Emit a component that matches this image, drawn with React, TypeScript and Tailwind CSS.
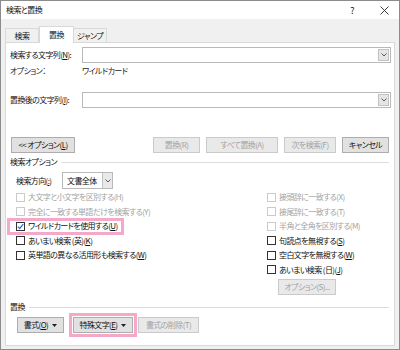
import type { ReactNode } from "react";

function U({ children }: { children: ReactNode }) {
  return <span className="underline underline-offset-[1px]">{children}</span>;
}

function Chevron() {
  return (
    <svg width="6" height="4" viewBox="0 0 6 4" aria-hidden>
      <path d="M0.5 0.5 3 3 5.5 0.5" fill="none" stroke="#5a5a5a" strokeWidth="1" />
    </svg>
  );
}

function Caret() {
  return (
    <svg width="5" height="3" viewBox="0 0 5 3" aria-hidden>
      <path d="M0 0h5L2.5 3z" fill="#222" />
    </svg>
  );
}

function Combo() {
  return (
    <div className="flex h-[16px] flex-1 border border-[#b9b9b9] bg-white p-px">
      <div className="ml-auto flex w-[11px] items-center justify-center border border-[#c2c2c2] bg-[#e5e5e5]">
        <Chevron />
      </div>
    </div>
  );
}

function Btn({
  children,
  className,
  disabled = false,
  caret = false,
}: {
  children: ReactNode;
  className: string;
  disabled?: boolean;
  caret?: boolean;
}) {
  return (
    <div
      className={[
        "flex h-[16px] items-center justify-center gap-[4px] border",
        disabled
          ? "border-[#cacaca] bg-[#e9e9e9] text-[#a3a3a3]"
          : "border-[#adadad] bg-[#e1e1e1] text-[#111]",
        className,
      ].join(" ")}
    >
      <span>{children}</span>
      {caret ? <Caret /> : null}
    </div>
  );
}

function Check({
  children,
  disabled = false,
  checked = false,
}: {
  children: ReactNode;
  disabled?: boolean;
  checked?: boolean;
}) {
  return (
    <div className="flex h-[14.5px] items-center gap-[3px]">
      <span
        className={[
          "flex size-[9px] shrink-0 items-center justify-center border bg-white",
          disabled ? "border-[#cbcbcb]" : "border-[#333]",
        ].join(" ")}
      >
        {checked ? (
          <svg width="7" height="7" viewBox="0 0 7 7" aria-hidden>
            <path d="M0.8 3.6 2.7 5.5 6.3 1.2" fill="none" stroke="#2b6fd1" strokeWidth="1.2" />
          </svg>
        ) : null}
      </span>
      <span className={disabled ? "text-[#a3a3a3]" : "text-[#111]"}>{children}</span>
    </div>
  );
}

function GroupLabel({ children }: { children: ReactNode }) {
  return (
    <div className="mr-[2px] flex h-[12px] items-center gap-[4px]">
      <span>{children}</span>
      <div className="h-px flex-1 bg-[#dcdcdc]" />
    </div>
  );
}

export default function App() {
  return (
    <div className="flex h-[350px] w-[400px] flex-col border border-[#8c8c8c] bg-[#f0f0f0] font-['Noto_Sans_CJK_JP','Noto_Sans',sans-serif] text-[8px] leading-none tracking-[-0.6px] text-[#111] [font-feature-settings:'palt']">
      {/* title bar */}
      <div className="flex h-[18px] shrink-0 items-center bg-white pl-[5px]">
        <span>検索と置換</span>
        <span className="ml-auto mr-[26px] text-[9px]">?</span>
        <svg className="mr-[10px]" width="9" height="9" viewBox="0 0 9 9" aria-hidden>
          <path d="M0.5 0.5 8.5 8.5M8.5 0.5 0.5 8.5" stroke="#222" strokeWidth="0.9" />
        </svg>
      </div>

      {/* tabs */}
      <div className="flex h-[23px] shrink-0 items-end pl-[4px]">
        <div className="flex h-[14px] w-[34px] items-center justify-center border border-b-0 border-[#d9d9d9] bg-[#f0f0f0]">
          検索
        </div>
        <div className="relative z-10 -mb-px flex h-[17px] w-[35px] items-center justify-center border border-b-0 border-[#d9d9d9] bg-white">
          置換
        </div>
        <div className="flex h-[14px] w-[33px] items-center justify-center border border-b-0 border-l-0 border-[#d9d9d9] bg-[#f0f0f0]">
          ジャンプ
        </div>
      </div>

      {/* page */}
      <div className="mx-[4px] flex h-[304px] flex-col border border-[#d9d9d9] bg-white pl-[4px] pr-[3px]">
        <div className="mt-[4px] flex items-center">
          <span className="w-[72px]">
            検索する文字列(<U>N</U>):
          </span>
          <Combo />
        </div>
        <div className="mt-[2px] flex h-[12px] items-center text-[#222]">
          <span className="w-[72px]">オプション：</span>
          <span>ワイルドカード</span>
        </div>
        <div className="mt-[15px] flex items-center">
          <span className="w-[72px]">
            置換後の文字列(<U>I</U>):
          </span>
          <Combo />
        </div>

        <div className="mt-[29px] mr-[2px] flex items-center">
          <Btn className="ml-[1px] w-[64px]">
            &lt;&lt; オプション(<U>L</U>)
          </Btn>
          <div className="ml-auto flex gap-[6px]">
            <Btn className="w-[47px]" disabled>
              置換(R)
            </Btn>
            <Btn className="w-[72px]" disabled>
              すべて置換(A)
            </Btn>
            <Btn className="w-[52px]" disabled>
              次を検索(F)
            </Btn>
            <Btn className="w-[47px]">キャンセル</Btn>
          </div>
        </div>

        <div className="mt-[3px]">
          <GroupLabel>検索オプション</GroupLabel>
        </div>

        <div className="mt-[4px] flex items-center pl-[6px]">
          <span className="w-[46px]">
            検索方向(<U>:</U>)
          </span>
          <div className="flex h-[17px] w-[51px] border border-[#b9b9b9] bg-white">
            <span className="flex flex-1 items-center pl-[4px]">文書全体</span>
            <div className="flex w-[10px] items-center justify-center border-l border-[#c2c2c2] bg-[#e9e9e9]">
              <Chevron />
            </div>
          </div>
        </div>

        <div className="mt-[1px] grid grid-cols-[251px_1fr] pl-[6px]">
          <div className="flex flex-col items-start">
            <Check disabled>大文字と小文字を区別する(H)</Check>
            <Check disabled>完全に一致する単語だけを検索する(Y)</Check>
            <div className="relative">
              <div className="pointer-events-none absolute -top-[1px] -bottom-[1px] -left-[9px] -right-[6px] border-[3px] border-[#f5a9c9]" />
              <Check checked>
                ワイルドカードを使用する(<U>U</U>)
              </Check>
            </div>
            <Check>
              あいまい検索 (英)(<U>K</U>)
            </Check>
            <Check>
              英単語の異なる活用形も検索する(<U>W</U>)
            </Check>
          </div>
          <div className="flex flex-col">
            <Check disabled>接頭辞に一致する(X)</Check>
            <Check disabled>接尾辞に一致する(T)</Check>
            <Check disabled>半角と全角を区別する(M)</Check>
            <Check>
              句読点を無視する(<U>S</U>)
            </Check>
            <Check>
              空白文字を無視する(<U>W</U>)
            </Check>
            <Check>
              あいまい検索 (日)(<U>J</U>)
            </Check>
            <Btn className="mt-[2px] ml-[11px] w-[58px]" disabled>
              オプション(S)...
            </Btn>
          </div>
        </div>

        <div className="mt-[6px]">
          <GroupLabel>置換</GroupLabel>
        </div>

        <div className="mt-[4px] flex items-center pl-[7px]">
          <Btn className="w-[47px]" caret>
            書式(<U>O</U>)
          </Btn>
          <div className="relative ml-[9px]">
            <div className="pointer-events-none absolute -inset-[4px] border-[3px] border-[#f5a9c9]" />
            <Btn className="w-[60px]" caret>
              特殊文字(<U>E</U>)
            </Btn>
          </div>
          <Btn className="ml-[5px] w-[61px]" disabled>
            書式の削除(T)
          </Btn>
        </div>
      </div>
    </div>
  );
}
